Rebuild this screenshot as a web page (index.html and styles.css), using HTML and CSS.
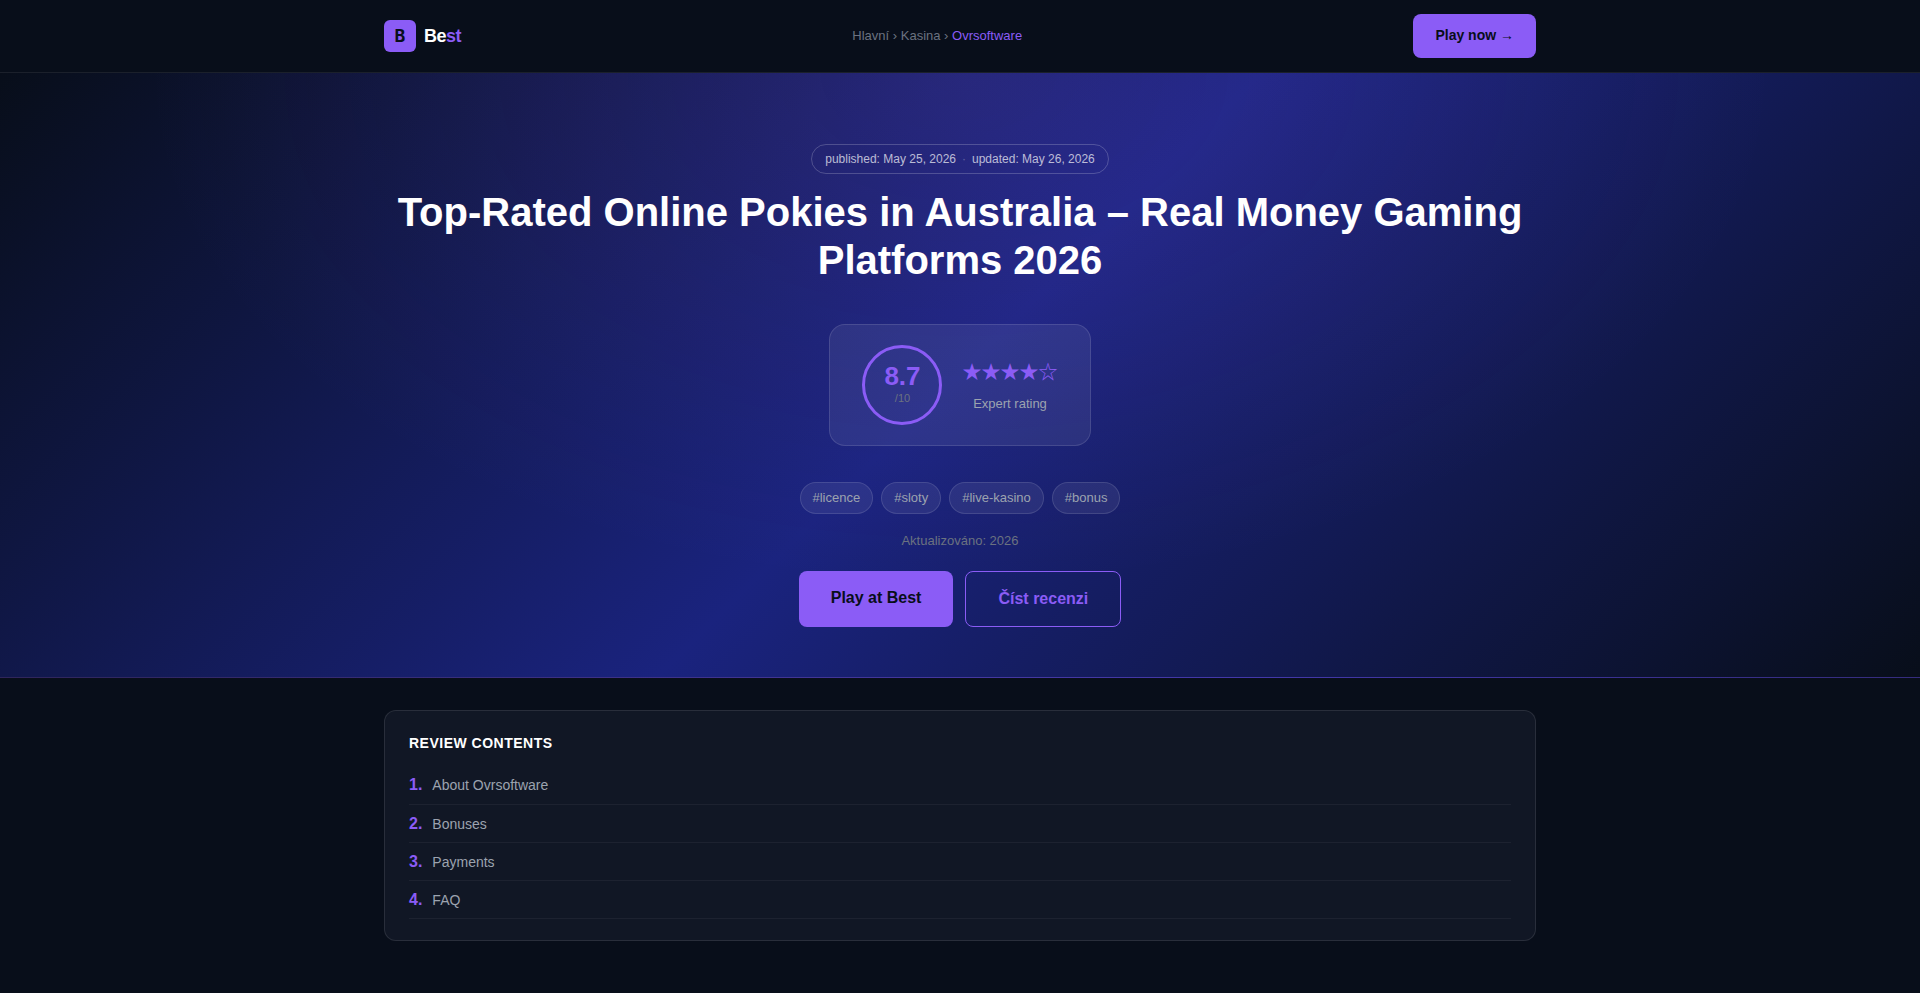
FILE: index.html
```html
<!DOCTYPE html>
<html lang="cs">
<head>
  <meta charset="UTF-8">
  <meta name="viewport" content="width=device-width, initial-scale=1">
  <title>Top-Rated Online Pokies in Australia – Real Money Gaming Platforms 2026</title>
  <link rel="stylesheet" href="styles.css">
</head>
<body>

<header class="header">
  <div class="container header-inner">
    <a href="#" class="logo">
      <svg class="logo-icon" viewBox="0 0 32 32" aria-hidden="true">
        <rect width="32" height="32" rx="6"/>
        <text x="16" y="22" text-anchor="middle">B</text>
      </svg>
      <span class="logo-text">Be<span>st</span></span>
    </a>
    <nav class="breadcrumbs">
      <a href="#">Hlavní</a> › <a href="#">Kasina</a> › <span>Ovrsoftware</span>
    </nav>
    <a href="#" class="btn-small">Play now →</a>
  </div>
</header>

<section class="hero">
  <div class="container hero-inner">
    <div class="dates">
      <span>published: May 25, 2026</span>
      <span class="dot">·</span>
      <span>updated: May 26, 2026</span>
    </div>
    <h1>Top-Rated Online Pokies in Australia – Real Money Gaming Platforms 2026</h1>

    <div class="rating">
      <div class="score">
        <span class="score-num">8.7</span>
        <span class="score-max">/10</span>
      </div>
      <div class="rating-info">
        <div class="stars">★★★★☆</div>
        <div class="rating-label">Expert rating</div>
      </div>
    </div>

    <div class="tags">
      <span class="tag">#licence</span>
      <span class="tag">#sloty</span>
      <span class="tag">#live-kasino</span>
      <span class="tag">#bonus</span>
    </div>
    <p class="updated">Aktualizováno: 2026</p>
    <div class="buttons">
      <a href="#" class="btn btn-primary">Play at Best</a>
      <a href="#toc" class="btn btn-outline">Číst recenzi</a>
    </div>
  </div>
</section>

<main class="container">
  <nav class="toc" id="toc">
    <h2>Review contents</h2>
    <ol>
      <li><a href="#">About Ovrsoftware</a></li>
      <li><a href="#">Bonuses</a></li>
      <li><a href="#">Payments</a></li>
      <li><a href="#">FAQ</a></li>
    </ol>
  </nav>
</main>

</body>
</html>
```
FILE: styles.css
```css
* {
  box-sizing: border-box;
  margin: 0;
  padding: 0;
}

body {
  font-family: "Liberation Sans", Arial, "DejaVu Sans", sans-serif;
  font-size: 16px;
  line-height: 1.7;
  background: #080e1a;
  color: #fff;
}

a {
  color: inherit;
  text-decoration: none;
}

.container {
  max-width: 1200px;
  margin: 0 auto;
  padding: 0 24px;
}

/* Header */
.header {
  background: #080e1a;
  border-bottom: 1px solid rgba(255, 255, 255, 0.08);
}

.header-inner {
  display: flex;
  align-items: center;
  justify-content: space-between;
  padding-top: 14px;
  padding-bottom: 14px;
}

.logo {
  display: flex;
  align-items: center;
  gap: 8px;
}

.logo-icon {
  width: 32px;
  height: 32px;
  fill: #8b5cf6;
}

.logo-icon text {
  font-family: "DejaVu Sans Mono", monospace;
  font-size: 18px;
  font-weight: 700;
  fill: #080e1a;
}

.logo-text {
  font-size: 18px;
  font-weight: 700;
  letter-spacing: -0.5px;
}

.logo-text span,
.breadcrumbs span {
  color: #8b5cf6;
}

.breadcrumbs {
  font-size: 13px;
  color: #6b7280;
}

.btn-small {
  padding: 10px 22px;
  border-radius: 8px;
  background: #8b5cf6;
  color: #080e1a;
  font-size: 14px;
  font-weight: 700;
}

/* Hero */
.hero {
  padding: 71px 0 50px;
  background:
    radial-gradient(ellipse at 50% 0%, rgba(139, 92, 246, 0.15), transparent 60%),
    linear-gradient(135deg, #080e1a 0%, #1a237e 50%, #080e1a 100%);
  border-bottom: 1px solid rgba(139, 92, 246, 0.3);
}

.hero-inner {
  display: flex;
  flex-direction: column;
  align-items: center;
  text-align: center;
}

.dates {
  display: flex;
  gap: 6px;
  padding: 4px 13px;
  margin-bottom: 14px;
  border: 1px solid rgba(255, 255, 255, 0.2);
  border-radius: 999px;
  font-size: 12px;
  color: rgba(255, 255, 255, 0.7);
}

.dot {
  opacity: 0.4;
}

h1 {
  margin-bottom: 40px;
  font-size: 40px;
  line-height: 1.2;
}

.rating {
  display: flex;
  align-items: center;
  gap: 20px;
  padding: 20px 32px;
  margin-bottom: 36px;
  background: rgba(255, 255, 255, 0.07);
  border: 1px solid rgba(255, 255, 255, 0.12);
  border-radius: 16px;
}

.score {
  display: flex;
  flex-direction: column;
  align-items: center;
  justify-content: center;
  width: 80px;
  height: 80px;
  border: 3px solid #8b5cf6;
  border-radius: 50%;
}

.score-num {
  font-size: 26px;
  font-weight: 700;
  line-height: 1;
  color: #8b5cf6;
}

.score-max {
  font-size: 11px;
  color: #6b7280;
}

.stars {
  margin-bottom: 6px;
  font-family: "Noto Sans CJK JP", sans-serif;
  font-size: 19px;
  color: #8b5cf6;
}

.rating-label {
  font-size: 13px;
  color: #9ca3af;
}

.tags {
  display: flex;
  flex-wrap: wrap;
  justify-content: center;
  gap: 8px;
  margin-bottom: 16px;
}

.tag {
  padding: 4px 12px;
  background: rgba(255, 255, 255, 0.07);
  border: 1px solid rgba(255, 255, 255, 0.12);
  border-radius: 20px;
  font-size: 13px;
  color: #9ca3af;
}

.updated {
  margin-bottom: 19px;
  font-size: 13px;
  color: #6b7280;
}

.buttons {
  display: flex;
  flex-wrap: wrap;
  justify-content: center;
  gap: 12px;
}

.btn {
  padding: 13px 32px;
  border-radius: 8px;
  font-weight: 700;
}

.btn-primary {
  background: #8b5cf6;
  color: #080e1a;
}

.btn-outline {
  border: 1px solid #8b5cf6;
  color: #8b5cf6;
}

/* Table of contents */
.toc {
  margin: 32px 0;
  padding: 21px 24px;
  background: #111725;
  border: 1px solid rgba(255, 255, 255, 0.1);
  border-radius: 12px;
}

.toc h2 {
  margin-bottom: 11px;
  font-size: 14px;
  letter-spacing: 0.5px;
  text-transform: uppercase;
}

.toc ol {
  list-style: none;
  counter-reset: toc;
}

.toc li {
  display: flex;
  align-items: baseline;
  gap: 10px;
  padding: 5px 0;
  border-bottom: 1px solid rgba(255, 255, 255, 0.05);
  counter-increment: toc;
}

.toc li::before {
  content: counter(toc) ".";
  font-weight: 700;
  color: #8b5cf6;
}

.toc a {
  font-size: 14px;
  color: #9ca3af;
}

@media (max-width: 768px) {
  .breadcrumbs {
    display: none;
  }

  h1 {
    font-size: 28px;
  }
}
```
